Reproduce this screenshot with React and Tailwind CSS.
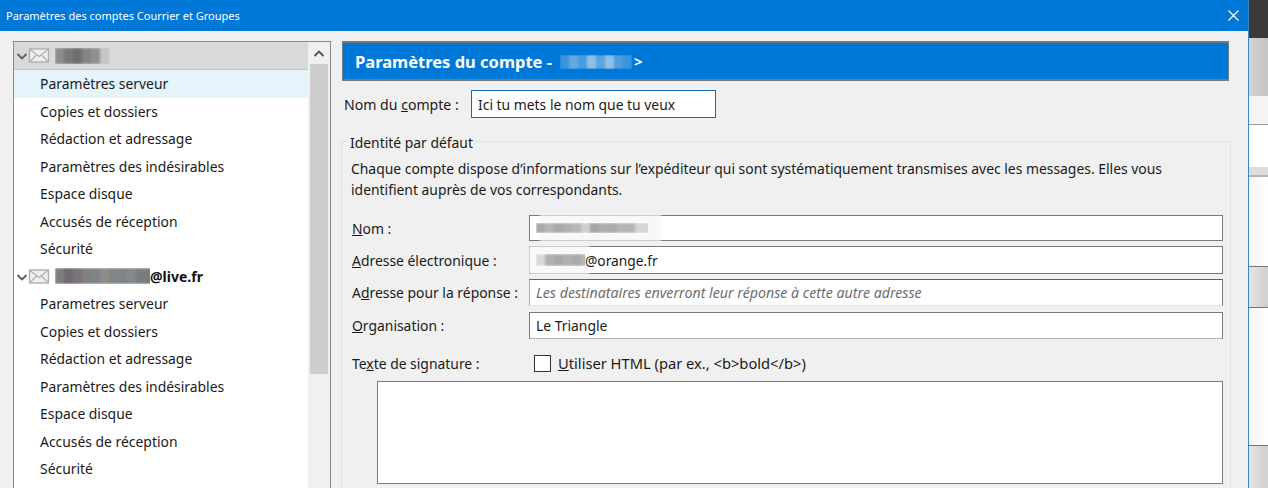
const font = { fontFamily: '"Noto Sans", sans-serif' };

const items = [
  "Rédaction et adressage",
  "Paramètres des indésirables",
  "Espace disque",
  "Accusés de réception",
  "Sécurité",
];

function Smudge({ blocks }) {
  // pixelated blur that hides the account names
  return (
    <span className="flex h-full blur-[1px]">
      {blocks.map((c, i) => (
        <span key={i} className="w-[9px] h-full shrink-0" style={{ backgroundColor: c }} />
      ))}
    </span>
  );
}

function MailIcon() {
  return (
    <svg width="36" height="15" viewBox="0 0 36 15" className="shrink-0">
      <path d="M1.5 6 L6 10.5 L10.5 6" fill="none" stroke="#5c5c5c" strokeWidth="1.8" />
      <rect x="13.5" y="1" width="19" height="13" fill="#efefef" stroke="#b0b0b0" strokeWidth="1.4" />
      <path d="M14 1.5 L23 8.5 L32 1.5 M14 13.5 L20.5 7 M32 13.5 L25.5 7" fill="none" stroke="#b0b0b0" strokeWidth="1.2" />
    </svg>
  );
}

function TreeItem({ children, active }) {
  return (
    <div className={`h-[27.5px] pl-[26px] flex items-center text-[#1a1a1a] ${active ? "bg-[#e5f3fb]" : ""}`}>
      {children}
    </div>
  );
}

function Field({ u, rest, pre, children, className, inputClass }) {
  return (
    <div className={`flex items-center ${className}`}>
      <label className="w-[177px] shrink-0 text-[#1a1a1a]">
        {pre}
        <span className="underline">{u}</span>
        {rest}
      </label>
      <div className={`flex-1 h-full bg-white border border-[#7a7a7a] pl-[6px] flex items-center relative ${inputClass}`}>
        {children}
      </div>
    </div>
  );
}

export default function App() {
  return (
    <div style={font} className="h-[488px] w-[1268px] overflow-hidden flex text-[13.9px] leading-[21px]">
      <div className="w-[1249px] h-full shrink-0 flex flex-col bg-[#f0f0f0] border-r border-[#3f86c6]">
        <div className="h-[31px] shrink-0 bg-[#0078d7] text-white text-[11px] pl-[6px] pr-[9px] flex items-center justify-between">
          <span>Paramètres des comptes Courrier et Groupes</span>
          <svg width="11" height="11" viewBox="0 0 11 11">
            <path d="M0.5 0.5 L10.5 10.5 M10.5 0.5 L0.5 10.5" stroke="#fff" strokeWidth="1.1" />
          </svg>
        </div>

        <div className="flex flex-1 min-h-0 pt-[10px] pl-[13px]">
          {/* account tree */}
          <div className="w-[318px] h-[500px] shrink-0 flex bg-white border border-[#8a8a8a]">
            <div className="w-[294px] shrink-0">
              <div className="h-[28px] bg-[#d9d9d9] border-b border-[#c4c4c4] pl-[2px] flex items-center gap-[3px]">
                <MailIcon />
                <span className="h-[16px] w-[55px] overflow-hidden">
                  <Smudge blocks={["#8d8d8d", "#777", "#6e6e6e", "#858585", "#909090", "#c5c5c5"]} />
                </span>
              </div>
              <TreeItem active>Paramètres serveur</TreeItem>
              <TreeItem>Copies et dossiers</TreeItem>
              {items.map((t) => (
                <TreeItem key={t}>{t}</TreeItem>
              ))}
              <div className="h-[27.5px] pl-[2px] flex items-center gap-[3px] font-bold text-[#111]">
                <MailIcon />
                <span className="h-[16px] w-[95px] overflow-hidden shrink-0">
                  <Smudge blocks={["#7d7d7d", "#6f6a6f", "#77757a", "#85807f", "#7d848a", "#8d8d88", "#858585", "#7f8488", "#86898c", "#7a7d80", "#7a7d80"]} />
                </span>
                <span className="-ml-[3px] text-[14px]">@live.fr</span>
              </div>
              <TreeItem>Parametres serveur</TreeItem>
              <TreeItem>Copies et dossiers</TreeItem>
              {items.map((t) => (
                <TreeItem key={t}>{t}</TreeItem>
              ))}
            </div>
            {/* scrollbar */}
            <div className="flex-1 bg-[#f0f0f0] px-[2px] flex flex-col items-center">
              <svg width="12" height="22" viewBox="0 0 12 22" className="shrink-0">
                <path d="M1.5 14 L6 9.5 L10.5 14" fill="none" stroke="#505050" strokeWidth="1.8" />
              </svg>
              <div className="w-full h-[310px] bg-[#cdcdcd]" />
            </div>
          </div>

          {/* account settings */}
          <div className="w-[890px] ml-[10px] shrink-0 flex flex-col">
            <div className="ml-px w-[887px] h-[40px] shrink-0 bg-[#0078d7] border border-y-2 border-[#737b83] pl-[12px] pt-px flex items-center text-white text-[16.5px] font-bold">
              Paramètres du compte -
              <span className="ml-[8px] h-[14px] w-[72px] overflow-hidden">
                <Smudge blocks={["#3c93dc", "#66a9e0", "#4b9cdd", "#8fc1e8", "#5aa4e0", "#8fc1e8", "#4f9ede", "#3c93dc"]} />
              </span>
              <span className="ml-[2px] text-[15px]">&gt;</span>
            </div>

            <div className="mt-[9px] h-[28px] shrink-0 flex items-center">
              <label className="w-[130px] pl-[3px] shrink-0 text-[14.1px] text-[#1a1a1a]">
                Nom du <span className="underline">c</span>ompte :
              </label>
              <div className="w-[245px] h-full bg-white border border-[#0f6cb5] pl-[6px] flex items-center text-[#1a1a1a]">
                Ici tu mets le nom que tu veux
              </div>
            </div>

            <fieldset className="mt-[11px] h-[420px] shrink-0 border border-[#e2e2e2] rounded-[2px] pl-[10px] pr-[7px]">
              <legend className="-ml-[5px] px-[3px] pt-[4px] text-[#1a1a1a] leading-[20px]">Identité par défaut</legend>
              <p className="mt-[5px] -ml-px w-[840px] text-[#1a1a1a]">
                Chaque compte dispose d’informations sur l’expéditeur qui sont systématiquement transmises avec les messages. Elles vous identifient auprès de vos correspondants.
              </p>
              <Field className="mt-[15px] h-[26px]" u="N" rest="om :">
                {/* white halo of the blur runs over the borders */}
                <span className="absolute -top-px -bottom-px left-[10px] w-[121px] bg-[#f8f8f8] blur-[1px]" />
                <span className="relative w-[112px] h-[10px] overflow-hidden">
                  <Smudge blocks={["#a8a8a8", "#b5b5b5", "#a9a9a9", "#b0b0b0", "#b8b8b8", "#cfcfcf", "#a5a5a5", "#adadad", "#aaa", "#b5b5b5", "#b5b5b5", "#d5d5d5", "#d5d5d5"]} />
                </span>
              </Field>
              <Field className="mt-[5px] h-[28px]" u="A" rest="dresse électronique :">
                <span className="absolute -top-px -bottom-px -left-px w-[60px] bg-[#f8f8f8] blur-[1px]" />
                <span className="relative w-[49px] h-[12px] overflow-hidden">
                  <Smudge blocks={["#d8d8d8", "#b0b0b0", "#a8a8a8", "#b5b0ab", "#aaa", "#b5b5b5"]} />
                </span>
                <span className="relative text-[13.75px] text-[#1a1a1a]">@orange.fr</span>
              </Field>
              <Field className="mt-[5px] h-[27px]" pre="A" u="d" rest="resse pour la réponse :" inputClass="border-t-[#606060] border-b-[#e4e4e4] border-l-[#b0b0b0]">
                <span className="italic text-[#6d6d6d] text-[14.2px]">Les destinataires enverront leur réponse à cette autre adresse</span>
              </Field>
              <Field className="mt-[6px] h-[27px]" u="O" rest="rganisation :" inputClass="border-b-[#b5b5b5]">
                <span className="text-[#1a1a1a]">Le Triangle</span>
              </Field>

              <div className="mt-[13px] h-[22px] flex items-center text-[#1a1a1a]">
                <span className="w-[182px] shrink-0">
                  Te<span className="underline">x</span>te de signature :
                </span>
                <span className="w-[17px] h-[17px] bg-white border border-[#333] shrink-0" />
                <span className="ml-[7px] text-[14.7px]">
                  <span className="underline">U</span>tiliser HTML (par ex., &lt;b&gt;bold&lt;/b&gt;)
                </span>
              </div>
              <div className="mt-[7px] ml-[25px] h-[103px] bg-white border border-[#7a7a7a]" />
            </fieldset>
          </div>
        </div>
      </div>

      {/* windows behind the dialog */}
      <div className="flex-1 flex flex-col">
        <div className="h-[38px] bg-[#3a3a3a]" />
        <div className="h-[58px] bg-gradient-to-r from-[#d2d2d2] to-[#c4c4c4]" />
        <div className="h-[29px] bg-[#f4f4f4] border-b border-[#9a9a9a]" />
        <div className="h-[42px] bg-white" />
        <div className="h-[10px] bg-[#dcdcdc] border-b-2 border-[#b5b5b5]" />
        <div className="h-[90px] bg-gradient-to-r from-[#f4f4f4] to-white border-b border-[#777]" />
        <div className="h-[41px] bg-gradient-to-r from-[#e4e4e4] to-[#cfcfcf] border-b border-[#777]" />
        <div className="h-[138px] bg-gradient-to-r from-[#f4f4f4] to-white border-b border-[#777]" />
        <div className="flex-1 bg-gradient-to-r from-[#e4e4e4] to-[#cfcfcf]" />
      </div>
    </div>
  );
}
